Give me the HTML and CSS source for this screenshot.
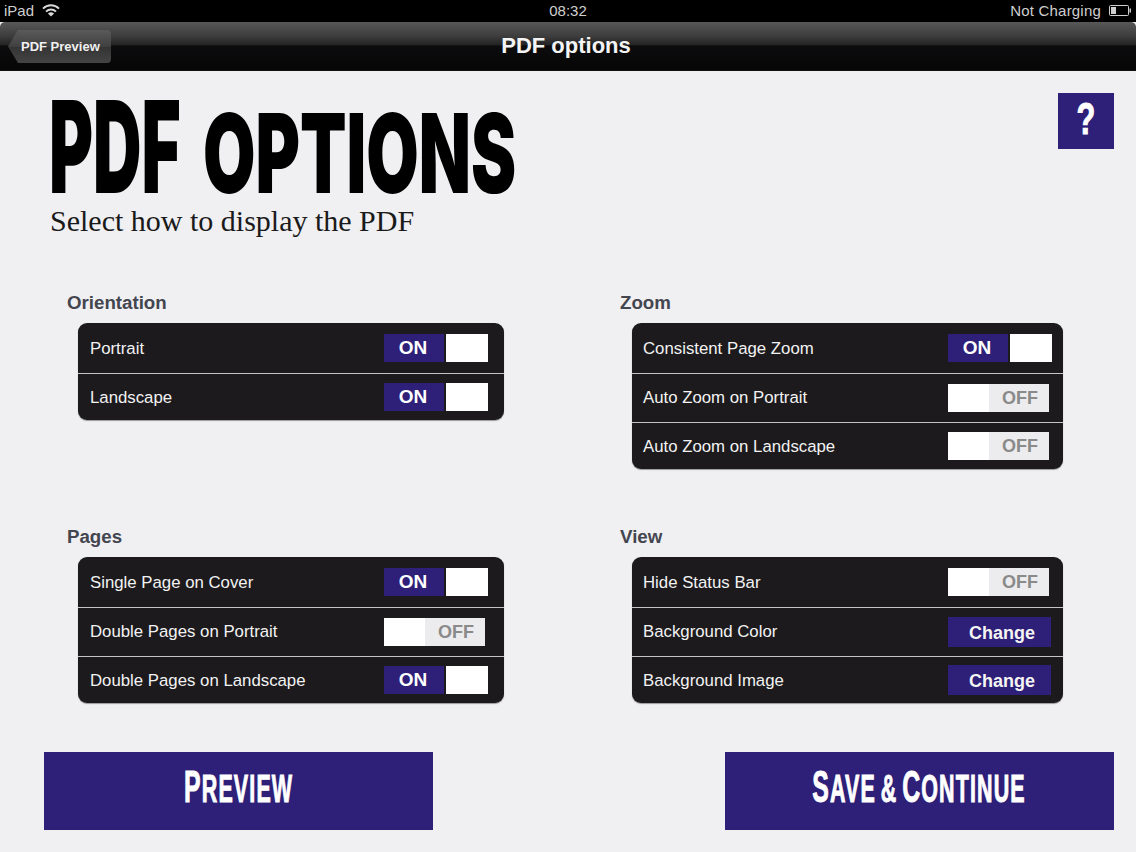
FILE: index.html
```html
<!DOCTYPE html>
<html lang="en">
<head>
    <meta charset="UTF-8">
    <meta name="viewport" content="width=device-width, initial-scale=1.0">
    <title>PDF options</title>
    <link rel="stylesheet" href="styles.css">
</head>
<body>
    <div class="statusbar">
        <div class="status-left">
            <span>iPad</span>
            <svg class="wifi" width="18" height="13" viewBox="0 0 18 13">
                <path d="M1 4.6 A11.5 11.5 0 0 1 17 4.6" fill="none" stroke="#d8d8d8" stroke-width="2"/>
                <path d="M4 7.6 A7.2 7.2 0 0 1 14 7.6" fill="none" stroke="#d8d8d8" stroke-width="2"/>
                <path d="M9 12.5 L5.9 9.6 A4.5 4.5 0 0 1 12.1 9.6 Z" fill="#d8d8d8"/>
            </svg>
        </div>
        <div class="status-time">08:32</div>
        <div class="status-right">
            <span>Not Charging</span>
            <svg class="battery" width="23" height="11" viewBox="0 0 23 11">
                <rect x="0.5" y="0.5" width="19" height="10" rx="1" fill="none" stroke="#cfcfcf"/>
                <rect x="2" y="2" width="5" height="7" fill="#cfcfcf"/>
                <path d="M20.5 3.5 H22 V7.5 H20.5 Z" fill="#cfcfcf"/>
            </svg>
        </div>
    </div>

    <div class="navbar">
        <button class="back">PDF Preview</button>
        <h2>PDF options</h2>
    </div>

    <div class="content">
        <div class="header">
            <div>
                <h1 class="title"><span class="title-big">PDF</span><span class="title-small">OPTIONS</span></h1>
                <p class="subtitle">Select how to display the PDF</p>
            </div>
            <button class="help"><span>?</span></button>
        </div>

        <div class="groups">
            <section class="group">
                <h3>Orientation</h3>
                <div class="card">
                    <div class="row"><span>Portrait</span><div class="switch on"><b>ON</b><i></i></div></div>
                    <div class="row"><span>Landscape</span><div class="switch on"><b>ON</b><i></i></div></div>
                </div>
            </section>
            <section class="group right">
                <h3>Zoom</h3>
                <div class="card">
                    <div class="row"><span>Consistent Page Zoom</span><div class="switch on"><b>ON</b><i></i></div></div>
                    <div class="row"><span>Auto Zoom on Portrait</span><div class="switch off"><i></i><b>OFF</b></div></div>
                    <div class="row"><span>Auto Zoom on Landscape</span><div class="switch off"><i></i><b>OFF</b></div></div>
                </div>
            </section>
            <section class="group">
                <h3>Pages</h3>
                <div class="card">
                    <div class="row"><span>Single Page on Cover</span><div class="switch on"><b>ON</b><i></i></div></div>
                    <div class="row"><span>Double Pages on Portrait</span><div class="switch off"><i></i><b>OFF</b></div></div>
                    <div class="row"><span>Double Pages on Landscape</span><div class="switch on"><b>ON</b><i></i></div></div>
                </div>
            </section>
            <section class="group right">
                <h3>View</h3>
                <div class="card">
                    <div class="row"><span>Hide Status Bar</span><div class="switch off"><i></i><b>OFF</b></div></div>
                    <div class="row"><span>Background Color</span><button class="change">Change</button></div>
                    <div class="row"><span>Background Image</span><button class="change">Change</button></div>
                </div>
            </section>
        </div>

        <div class="actions">
            <button class="action"><span class="action-text"><span class="cap">P</span>REVIEW</span></button>
            <button class="action"><span class="action-text"><span class="cap">S</span>AVE &amp; <span class="cap">C</span>ONTINUE</span></button>
        </div>
    </div>
</body>
</html>
```

FILE: styles.css
```css
* {
    box-sizing: border-box;
}
body {
    margin: 0;
    width: 1136px;
    height: 852px;
    overflow: hidden;
    background-color: #f0eff2;
    font-family: "Liberation Sans", Arial, sans-serif;
}
button {
    border: none;
    padding: 0;
    font-family: inherit;
    cursor: pointer;
}

/* status bar */
.statusbar {
    height: 22px;
    background: #000;
    color: #cfcfcf;
    font-size: 15px;
    display: grid;
    grid-template-columns: 1fr auto 1fr;
    align-items: center;
    padding: 0 4px 2px;
}
.status-left {
    display: flex;
    align-items: center;
    gap: 8px;
}
.status-right {
    display: flex;
    justify-content: flex-end;
    align-items: center;
    gap: 8px;
    letter-spacing: 0.2px;
}

/* nav bar */
.navbar {
    height: 49px;
    position: relative;
    display: flex;
    align-items: center;
    justify-content: center;
    padding-right: 4px;
    border-radius: 5px 5px 0 0;
    background: linear-gradient(#585858 0%, #3c3c3c 30%, #242424 47%, #0c0c0e 50%, #060606 100%);
    border-bottom: 1px solid #111;
}
.navbar h2 {
    margin: 0;
    color: #f4f4f4;
    font-size: 22px;
    font-weight: bold;
}
.back {
    position: absolute;
    left: 8px;
    top: 8px;
    width: 103px;
    height: 33px;
    padding-left: 13px;
    text-align: left;
    color: #f0f0f0;
    font-size: 13px;
    font-weight: bold;
    background: linear-gradient(#5a5a5a, #404040 50%, #343434 52%, #444);
    border-radius: 0 4px 4px 0;
    clip-path: polygon(10px 0, 100% 0, 100% 100%, 10px 100%, 0 50%);
}

/* page */
.content {
    padding: 22px 22px 0 44px;
}
.header {
    display: flex;
    justify-content: space-between;
    height: 200px;
}
.title {
    margin: 0 0 0 5px;
    height: 101px;
    display: flex;
    align-items: flex-end;
    color: #000;
    font-family: Inter, "Liberation Sans", sans-serif;
    font-weight: 900;
}
.title-big {
    display: block;
    width: 154px;
    font-size: 128px;
    line-height: 94px;
    transform: scaleX(0.524);
    transform-origin: left bottom;
}
.title-small {
    display: block;
    font-size: 110px;
    line-height: 82px;
    transform: scaleX(0.616);
    transform-origin: left bottom;
}
.subtitle {
    margin: 10px 0 0 6px;
    font-family: "Liberation Serif", "Times New Roman", serif;
    font-size: 30px;
    line-height: 34px;
    color: #1a1a1a;
}
.help {
    width: 56px;
    height: 56px;
    padding-bottom: 4px;
    background: #2e1f78;
    color: #fff;
    font-size: 44px;
    font-weight: bold;
    -webkit-text-stroke: 1px #fff;
}
.help span {
    display: block;
    transform: scaleX(0.7);
}

/* option groups */
.groups {
    display: grid;
    grid-template-columns: 553px 1fr;
    grid-template-rows: 234px auto;
    padding-left: 23px;
}
.group h3 {
    margin: 0 0 10px;
    height: 20px;
    line-height: 20px;
    font-size: 18.7px;
    color: #43454f;
}
.card {
    width: 426px;
    margin-left: 11px;
    background: #1c1a1d;
    border-radius: 9px;
    box-shadow: 0 1px 1px #999;
}
.group.right .card {
    width: 431px;
    margin-left: 12px;
}
.row {
    height: 49px;
    display: flex;
    align-items: center;
    justify-content: space-between;
    padding: 0 16px 0 12px;
    color: #f2f2f2;
    font-size: 16.8px;
    border-top: 1px solid #c4c4c4;
}
.row:first-child {
    height: 50px;
    border-top: none;
}
.row:last-child {
    height: 47px;
}
.row:first-child span,
.row:last-child span {
    padding-top: 1px;
}
.group.right .row {
    padding: 0 11px;
}

/* switches */
.switch {
    display: flex;
    height: 28px;
    font-size: 19px;
    font-style: normal;
}
.switch b {
    display: flex;
    align-items: center;
    justify-content: center;
}
.switch i {
    display: block;
}
.switch.on {
    width: 104px;
    gap: 2px;
}
.switch.on b {
    width: 60px;
    padding-right: 2px;
    background: #2e1f78;
    color: #fff;
}
.switch.on i {
    width: 42px;
    background: #fff;
}
.switch.off {
    width: 101px;
    margin-right: 3px;
    font-size: 18px;
}
.switch.off b {
    width: 60px;
    background: #ececee;
    color: #8a8a8a;
    padding-left: 2px;
}
.switch.off i {
    width: 41px;
    background: #fff;
}
.change {
    width: 103px;
    height: 30px;
    margin-right: 1px;
    background: #2e1f78;
    color: #f4f4f4;
    font-size: 18px;
    font-weight: bold;
    padding: 3px 0 0 5px;
}

/* bottom buttons */
.actions {
    display: flex;
    justify-content: space-between;
    margin-top: 49px;
}
.action {
    width: 389px;
    height: 78px;
    padding-bottom: 8px;
    background: #2e1f78;
    color: #fff;
    font-weight: bold;
    font-size: 38px;
    letter-spacing: 2px;
    word-spacing: -4px;
    -webkit-text-stroke: 1px #fff;
    line-height: 1;
}
.action-text {
    display: inline-block;
    white-space: nowrap;
    transform: scaleX(0.565);
}
.cap {
    font-size: 44px;
}
```
